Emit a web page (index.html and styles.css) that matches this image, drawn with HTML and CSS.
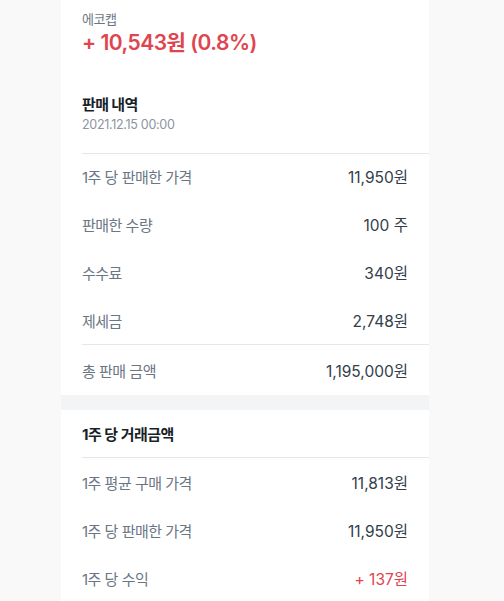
FILE: index.html
```html
<!DOCTYPE html>
<html lang="ko">
<head>
<meta charset="utf-8">
<link rel="stylesheet" href="styles.css">
</head>
<body>
<div class="page">
  <div class="card">
    <header class="summary">
      <div class="stock">에코캡</div>
      <div class="profit">+ 10,543원 (0.8%)</div>
      <div class="section-title">판매 내역</div>
      <div class="date">2021.12.15 00:00</div>
    </header>
    <div class="list first">
      <div class="row"><span class="label">1주 당 판매한 가격</span><span class="value">11,950원</span></div>
      <div class="row"><span class="label">판매한 수량</span><span class="value">100 주</span></div>
      <div class="row"><span class="label">수수료</span><span class="value">340원</span></div>
      <div class="row"><span class="label">제세금</span><span class="value">2,748원</span></div>
      <div class="row total"><span class="label">총 판매 금액</span><span class="value">1,195,000원</span></div>
    </div>
    <div class="band"></div>
    <div class="list">
      <div class="row head"><span class="title">1주 당 거래금액</span></div>
      <div class="row"><span class="label">1주 평균 구매 가격</span><span class="value">11,813원</span></div>
      <div class="row"><span class="label">1주 당 판매한 가격</span><span class="value">11,950원</span></div>
      <div class="row"><span class="label">1주 당 수익</span><span class="value red">+ 137원</span></div>
    </div>
  </div>
</div>
</body>
</html>
```
FILE: styles.css
```css
* { box-sizing: border-box; }
html, body {
  margin: 0;
  padding: 0;
  background: #f9f9f9;
  font-family: Inter, "Noto Sans CJK KR", sans-serif;
  overflow: hidden;
}
.page {
  display: flex;
  padding-left: 61px;
}
.card {
  width: 368px;
  min-height: 620px;
  background: #ffffff;
}
.summary {
  margin-left: 21px;
  padding: 10px 21px 19px 0;
  border-bottom: 1px solid #e5e8eb;
}
.stock {
  font-size: 13px;
  line-height: 18px;
  color: #6b7684;
  letter-spacing: -0.5px;
}
.profit {
  font-size: 21px;
  line-height: 30px;
  font-weight: 600;
  color: #e0454f;
  letter-spacing: -0.5px;
}
.section-title {
  margin-top: 36px;
  font-size: 15px;
  line-height: 22px;
  font-weight: 700;
  color: #191f28;
  letter-spacing: -0.6px;
}
.date {
  font-size: 12.5px;
  line-height: 18px;
  color: #8b95a1;
  letter-spacing: -0.3px;
}
.list {
  margin-left: 21px;
}
.list.first {
  margin-top: -2px;
}
.row {
  height: 48px;
  display: flex;
  align-items: center;
  justify-content: space-between;
  padding-right: 21px;
  font-size: 15px;
}
.label {
  color: #6b7684;
  letter-spacing: -0.5px;
}
.value {
  color: #333d4b;
  font-size: 15.5px;
  letter-spacing: 0;
}
.value.red {
  color: #e0454f;
}
.row.total {
  border-top: 1px solid #e5e8eb;
  height: 51px;
}
.row.head {
  border-bottom: 1px solid #e5e8eb;
}
.title {
  font-weight: 700;
  color: #191f28;
  letter-spacing: -0.5px;
}
.band {
  height: 15px;
  background: #f2f4f6;
}
```
